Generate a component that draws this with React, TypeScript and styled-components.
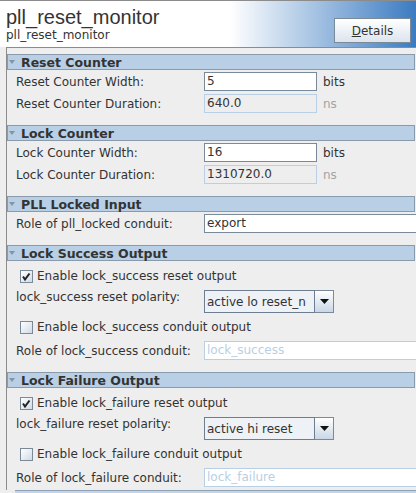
import React from 'react'
import styled, { createGlobalStyle } from 'styled-components'

const GlobalStyle = createGlobalStyle`
  html, body {
    margin: 0;
    padding: 0;
    background: #eeeeee;
  }
  body {
    font-family: "DejaVu Sans", "Liberation Sans", sans-serif;
    color: #333333;
  }
`

const Window = styled.div`
  width: 416px;
  height: 493px;
  overflow: hidden;
  display: flex;
  flex-direction: column;
  background: #eeeeee;
`

const Banner = styled.div`
  flex: none;
  height: 46px;
  border-top: 1px solid #8c8c8c;
  background: linear-gradient(to right, #ffffff 0, #ffffff 230px, #3b7bc1 100%);
  display: flex;
  justify-content: space-between;
  align-items: flex-start;
  padding: 0 5px 0 6px;
`

const TitleBlock = styled.div`
  padding-top: 6px;
`

const Title = styled.div`
  font-family: "Liberation Sans", Arial, sans-serif;
  font-size: 20px;
  line-height: 20px;
`

const Subtitle = styled.div`
  font-size: 12px;
  line-height: 12px;
  margin-top: 2px;
`

const DetailsButton = styled.button`
  margin-top: 17px;
  width: 77px;
  height: 25px;
  padding: 0;
  border: 1px solid #7a8a99;
  background: linear-gradient(to bottom, #ffffff, #dce4ed);
  font-family: inherit;
  font-size: 12px;
  color: #333333;

  u {
    text-decoration: underline;
  }
`

const Pane = styled.div`
  flex: 1;
  min-height: 0;
  overflow: hidden;
  margin-left: 6px;
  border-left: 1px solid #8c8c8c;
  border-top: 1px solid #8c8c8c;
  padding: 6px 1px 0 0;
`

const SectionHead = styled.div`
  height: 14px;
  border: 1px solid #8b9aab;
  background: #b8cfe5;
  display: flex;
  align-items: center;
  gap: 6px;
  padding-left: 1px;
  font-weight: bold;
  font-size: 12.5px;
  color: #333333;
  white-space: nowrap;
`

const SectionBody = styled.div`
  display: flex;
  flex-direction: column;
  gap: 3px;
  padding: 2px 0 12px;
`

const Row = styled.div<{ $h: number }>`
  display: flex;
  align-items: center;
  height: ${({ $h }) => $h}px;
  white-space: nowrap;
  font-size: 12px;

  &:first-child {
    margin-top: ${({ $h }) => ($h === 22 ? '2px' : '0')};
  }
`

const Label = styled.div<{ $top?: boolean }>`
  flex: none;
  width: 188px;
  padding-left: 9px;
  align-self: ${({ $top }) => ($top ? 'flex-start' : 'center')};
  line-height: ${({ $top }) => ($top ? '14px' : 'normal')};
`

const Field = styled.div<{ $state: 'on' | 'off' | 'ghost'; $w: number }>`
  flex: none;
  box-sizing: border-box;
  width: ${({ $w }) => $w}px;
  height: 19px;
  padding-left: 2px;
  line-height: 17px;
  border: 1px solid ${({ $state }) => ($state === 'on' ? '#7a8a99' : '#b8cfe5')};
  background: ${({ $state }) => ($state === 'off' ? '#eeeeee' : '#ffffff')};
  color: ${({ $state }) => ($state === 'ghost' ? '#b8cfe5' : '#333333')};
`

const Unit = styled.span<{ $dim?: boolean }>`
  margin-left: 6px;
  color: ${({ $dim }) => ($dim ? '#a3a3a3' : '#333333')};
`

const Box = styled.span`
  flex: none;
  box-sizing: border-box;
  width: 13px;
  height: 13px;
  margin: 0 4px 0 13px;
  border: 1px solid #7a8a99;
  background: linear-gradient(135deg, #ffffff, #cfdbe7);
  display: flex;
  align-items: center;
  justify-content: center;
`

const Combo = styled.div`
  flex: none;
  display: flex;
  width: 130px;
  height: 23px;
`

const ComboText = styled.div`
  flex: 1;
  border: 1px solid #6d7e91;
  background: #eef1f5;
  padding-left: 2px;
  display: flex;
  align-items: center;
`

const ComboArrow = styled.div`
  width: 18px;
  border: 1px solid #7a8a99;
  border-left: none;
  background: linear-gradient(to bottom, #ffffff, #c9d7e5);
  display: flex;
  align-items: center;
  justify-content: center;
`

const ScrollEdge = styled.div`
  flex: none;
  height: 2px;
  margin-left: 15px;
  border-top: 1px solid #8ea2b7;
  background: #c4d4e4;
`

const Triangle = () => (
  <svg width="6" height="4" viewBox="0 0 6 4">
    <path d="M0 0 H6 L3 4 Z" fill="#8595a6" />
  </svg>
)

type Item =
  | { kind: 'field'; label: string; value: string; state: 'on' | 'off' | 'ghost'; w: number; unit?: string }
  | { kind: 'check'; label: string; checked: boolean }
  | { kind: 'combo'; label: string; value: string }

const sections: { title: string; items: Item[] }[] = [
  {
    title: 'Reset Counter',
    items: [
      { kind: 'field', label: 'Reset Counter Width:', value: '5', state: 'on', w: 113, unit: 'bits' },
      { kind: 'field', label: 'Reset Counter Duration:', value: '640.0', state: 'off', w: 113, unit: 'ns' },
    ],
  },
  {
    title: 'Lock Counter',
    items: [
      { kind: 'field', label: 'Lock Counter Width:', value: '16', state: 'on', w: 113, unit: 'bits' },
      { kind: 'field', label: 'Lock Counter Duration:', value: '1310720.0', state: 'off', w: 113, unit: 'ns' },
    ],
  },
  {
    title: 'PLL Locked Input',
    items: [{ kind: 'field', label: 'Role of pll_locked conduit:', value: 'export', state: 'on', w: 230 }],
  },
  {
    title: 'Lock Success Output',
    items: [
      { kind: 'check', label: 'Enable lock_success reset output', checked: true },
      { kind: 'combo', label: 'lock_success reset polarity:', value: 'active lo reset_n' },
      { kind: 'check', label: 'Enable lock_success conduit output', checked: false },
      { kind: 'field', label: 'Role of lock_success conduit:', value: 'lock_success', state: 'ghost', w: 230 },
    ],
  },
  {
    title: 'Lock Failure Output',
    items: [
      { kind: 'check', label: 'Enable lock_failure reset output', checked: true },
      { kind: 'combo', label: 'lock_failure reset polarity:', value: 'active hi reset' },
      { kind: 'check', label: 'Enable lock_failure conduit output', checked: false },
      { kind: 'field', label: 'Role of lock_failure conduit:', value: 'lock_failure', state: 'ghost', w: 230 },
    ],
  },
]

function renderItem(it: Item, i: number) {
  if (it.kind === 'check') {
    return (
      <Row $h={22} key={i}>
        <Box>
          {it.checked && (
            <svg width="11" height="11" viewBox="0 0 11 11">
              <path d="M2 5.5 L4 8.5 L8.5 2.5" fill="none" stroke="#222" strokeWidth="2" />
            </svg>
          )}
        </Box>
        {it.label}
      </Row>
    )
  }
  if (it.kind === 'combo') {
    return (
      <Row $h={23} key={i}>
        <Label $top>{it.label}</Label>
        <Combo>
          <ComboText>{it.value}</ComboText>
          <ComboArrow>
            <svg width="9" height="5" viewBox="0 0 9 5">
              <path d="M0 0 H9 L4.5 5 Z" fill="#111" />
            </svg>
          </ComboArrow>
        </Combo>
      </Row>
    )
  }
  return (
    <Row $h={19} key={i}>
      <Label>{it.label}</Label>
      <Field $state={it.state} $w={it.w}>{it.value}</Field>
      {it.unit && <Unit $dim={it.state === 'off'}>{it.unit}</Unit>}
    </Row>
  )
}

export default function App() {
  return (
    <Window>
      <GlobalStyle />
      <Banner>
        <TitleBlock>
          <Title>pll_reset_monitor</Title>
          <Subtitle>pll_reset_monitor</Subtitle>
        </TitleBlock>
        <DetailsButton>
          <u>D</u>etails
        </DetailsButton>
      </Banner>
      <Pane>
        {sections.map((s) => (
          <section key={s.title}>
            <SectionHead>
              <Triangle />
              {s.title}
            </SectionHead>
            <SectionBody>{s.items.map(renderItem)}</SectionBody>
          </section>
        ))}
      </Pane>
      <ScrollEdge />
    </Window>
  )
}
